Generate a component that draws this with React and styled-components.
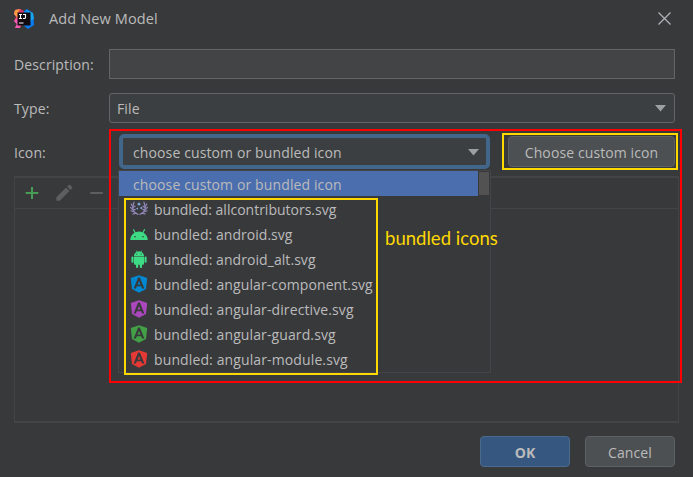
import React from 'react';
import styled, { createGlobalStyle } from 'styled-components';

const GlobalStyle = createGlobalStyle`
  * { box-sizing: border-box; }
  body { margin: 0; background: #38393b; }
`;

const Dialog = styled.main`
  position: relative;
  display: flex;
  flex-direction: column;
  width: 693px;
  height: 477px;
  padding: 0 14px;
  overflow: hidden;
  background: #38393b;
  color: #bbbbbb;
  font: 14px/20px 'Open Sans', 'Noto Sans', sans-serif;
  letter-spacing: 0.12px;
  white-space: nowrap;
`;

const TitleBar = styled.header`
  display: flex;
  align-items: center;
  height: 37px;
  margin-bottom: 12px;
`;

const Title = styled.h1`
  flex: 1;
  margin: 0 0 0 15px;
  font-size: 14.5px;
  font-weight: 400;
  letter-spacing: 0.13px;
`;

const CloseButton = styled.button`
  display: flex;
  margin-right: 8px;
  padding: 0;
  border: 0;
  background: none;
  color: #afb1b3;
`;

const Form = styled.div`
  display: grid;
  grid-template-columns: 95px 566px;
  grid-template-rows: 30px 30px 35px;
  row-gap: 14px;
  align-items: center;
`;

const Label = styled.label`
  padding-top: 2px;
`;

const IconLabel = styled.label`
  margin-top: -3px;
`;

const TextField = styled.input`
  width: 566px;
  height: 30px;
  border: 1px solid #646566;
  background: #434445;
`;

const Select = styled.div`
  display: flex;
  align-items: center;
  justify-content: space-between;
  width: ${(p) => (p.$focused ? 371 : 566)}px;
  height: ${(p) => (p.$focused ? 35 : 30)}px;
  padding: ${(p) => (p.$focused ? '2px 7px 0 10px' : '1px 8px 0 7px')};
  border: ${(p) => (p.$focused ? '4px solid #41668a' : '1px solid #646566')};
  border-radius: ${(p) => (p.$focused ? 5 : 3)}px;
  background: #3c3f41;
`;

const IconRow = styled.div`
  position: relative;
  display: flex;
  align-items: center;
  gap: 18px;
  width: 566px;
  height: 35px;
  margin-top: -6px;
  padding-left: 10px;
`;

const Button = styled.button`
  width: ${(p) => p.$width}px;
  height: 31px;
  padding: 2px 0 0;
  border: 1px solid ${(p) => (p.$primary ? '#4a6b8e' : '#5e6162')};
  border-radius: 4px;
  background: ${(p) => (p.$primary ? '#365880' : '#4c5052')};
  color: #bbbbbb;
  font: inherit;
  font-weight: ${(p) => (p.$primary ? 700 : 400)};
  letter-spacing: ${(p) => (p.$primary ? 0 : 0.1)}px;
`;

const Popup = styled.div`
  position: absolute;
  top: 36px;
  left: 9px;
  width: 373px;
  height: 203px;
  border: 1px solid #434548;
  background: #38393b;
`;

const PopupHead = styled.div`
  display: flex;
  gap: 1px;
  align-items: center;
`;

const SelectedOption = styled.div`
  width: 359px;
  height: 25px;
  padding: 4px 0 0 14px;
  background: #4b6eaf;
`;

const ScrollThumb = styled.div`
  width: 10px;
  height: 23px;
  background: #525252;
`;

const OptionList = styled.ul`
  margin: 1px 0 0;
  padding: 0 0 0 11px;
  list-style: none;
`;

const Option = styled.li`
  display: flex;
  align-items: center;
  gap: 6px;
  height: 25px;
  letter-spacing: ${(p) => p.$spacing}px;

  svg { margin-top: -1px; }
`;

const TablePanel = styled.section`
  height: 247px;
  margin: 4px 0 0;
  width: 665px;
  border: 1px solid #434446;
  border-width: 2px 1px;
`;

const Toolbar = styled.div`
  display: flex;
  align-items: center;
  gap: 15px;
  height: 31px;
  padding-left: 9px;
  border-bottom: 1px solid #434446;
`;

const Footer = styled.footer`
  display: flex;
  justify-content: flex-end;
  gap: 15px;
  margin: 13px 4px 0 0;
`;

const Highlight = styled.div`
  position: absolute;
  left: ${(p) => p.$x}px;
  top: ${(p) => p.$y}px;
  width: ${(p) => p.$w}px;
  height: ${(p) => p.$h}px;
  border: 2px solid ${(p) => p.$color};
  pointer-events: none;
`;

const Note = styled.div`
  position: absolute;
  left: 385px;
  top: 226px;
  color: #ffd800;
  font: 18.5px/24px Lato, sans-serif;
  letter-spacing: 0.03px;
`;

const Logo = () => (
  <svg width="20" height="20" viewBox="0 0 20 20">
    <path d="M1 1 6 0 10 4 7 17 6 19 1 19 3 15 0 12 2 8 0 5Z" fill="#f54a71" />
    <path d="M1 1 6 0 9 4 4 9 0 5Z" fill="#fa9a42" />
    <path d="M0 12 4 9 6 19 1 19 3 15Z" fill="#f35bb7" />
    <path d="M6 0 10 2 8 6 4 4Z" fill="#d8366a" />
    <path d="M10 2 13 0 19 4 20 16 14 20 9 16Z" fill="#087cf4" />
    <path d="M12 1 19 4 20 10 16 12Z" fill="#18a5ed" />
    <rect x="3.5" y="3.5" width="13" height="13" fill="#130b10" />
    <path d="M5 5.5h3M6.5 5.5v4M5 9.5h3M9 5.5h2.5v3q0 1-1 1H9M5 14h4.5" fill="none" stroke="#fff" strokeWidth="1.1" />
  </svg>
);

const CloseIcon = () => (
  <svg width="13" height="13" viewBox="0 0 13 13">
    <path d="m.5.5 12 12m0-12-12 12" stroke="currentColor" strokeWidth="1.3" />
  </svg>
);

const Arrow = () => (
  <svg width="11" height="7" viewBox="0 0 11 7">
    <path d="M0 0h11L5.5 6.5Z" fill="#9da0a2" />
  </svg>
);

const Laurel = () => (
  <svg width="18" height="16" viewBox="0 0 18 16">
    <g fill="none" stroke="#9489bb" strokeLinecap="round">
      <path d="M3.6 3C1.6 7 3 11.5 8 13.4M14.4 3c2 4 .6 8.5-4.4 10.4" strokeWidth="1.2" />
      <path d="m4 1.2-.6 2.6M1.2 3l1.5 2.8M.6 6.3 2.7 8.6M1 9.8l2.6 1M3 12.9l2.6-.4M5 5.2 3.5 6.4M5.3 8.3l-1.6.6M14 1.2l.6 2.6M16.8 3l-1.5 2.8M17.4 6.3l-2.1 2.3M17 9.8l-2.6 1M15 12.9l-2.6-.4M13 5.2l1.5 1.2M12.7 8.3l1.6.6" strokeWidth="1.2" />
    </g>
    <path d="m9 .7.6 1.8 1.8.6-1.8.6L9 5.5l-.6-1.8-1.8-.6 1.8-.6ZM11.3 5.4l.5 1.1 1.1.5-1.1.5-.5 1.1-.5-1.1-1.1-.5 1.1-.5ZM7.2 6.3l.4.9.9.4-.9.4-.4.9-.4-.9-.9-.4.9-.4Z" fill="#8fb8f4" />
  </svg>
);

const AndroidHead = () => (
  <svg width="18" height="18" viewBox="0 0 18 18">
    <path d="M.2 15C.4 11.4 2.2 9 4.5 7.8L2.8 4.5l1-.5 1.7 3.2c2.2-.8 4.8-.8 7 0L14.2 4l1 .5-1.7 3.3c2.3 1.2 4.1 3.6 4.3 7.2Z" fill="#3ddc84" />
    <circle cx="5" cy="11.8" r=".8" fill="#38393b" />
    <circle cx="13" cy="11.8" r=".8" fill="#38393b" />
  </svg>
);

const AndroidBody = () => (
  <svg width="18" height="18" viewBox="0 0 18 18">
    <g fill="#3ddc84">
      <path d="M4 5.9C4.1 4 5 2.6 6.5 1.9L5.8.4l.5-.2.7 1.5a6 6 0 0 1 4 0l.7-1.5.5.2-.7 1.5C13 2.6 13.9 4 14 5.9Z" />
      <path d="M4 6.6h10v7.1q0 1-1 1h-1v2.2a1.1 1.1 0 0 1-2.2 0v-2.2H8.2v2.2a1.1 1.1 0 0 1-2.2 0v-2.2H5q-1 0-1-1Z" />
      <rect x="1.4" y="6.5" width="2.1" height="6.2" rx="1" />
      <rect x="14.5" y="6.5" width="2.1" height="6.2" rx="1" />
    </g>
    <circle cx="6.8" cy="4" r=".6" fill="#38393b" />
    <circle cx="11.2" cy="4" r=".6" fill="#38393b" />
  </svg>
);

const Angular = ({ color }) => (
  <svg width="18" height="18" viewBox="0 0 18 18">
    <path d="M9 .2 17.2 3 16 14 9 17.8 2 14 .8 3Z" fill={color} />
    <path d="M8.1 2.6 3.6 13.5h2.3l.9-2.3h4.4l.9 2.3h2.3L9.9 2.6ZM9 5.9l1.4 3.5H7.6Z" fill="#38393b" fillRule="evenodd" />
  </svg>
);

const PlusIcon = () => (
  <svg width="17" height="16" viewBox="0 0 17 16">
    <path d="M8 2v12M1.7 8h12.6" stroke="#499c54" strokeWidth="2" />
  </svg>
);

const PencilIcon = () => (
  <svg width="17" height="18" viewBox="0 0 17 18">
    <path d="M.3 13.2 10.1 3.5l3.4 3.4-9.7 9.8H.3ZM11.1 2.5l1.6-1.6q.7-.7 1.4 0l2 2q.7.7 0 1.4l-1.6 1.6Z" fill="#5d5e5f" />
  </svg>
);

const MinusIcon = () => (
  <svg width="17" height="16" viewBox="0 0 17 16">
    <path d="M2.3 8h12.6" stroke="#5d5e5f" strokeWidth="2" />
  </svg>
);

const OPTIONS = [
  { name: 'allcontributors', icon: <Laurel />, spacing: 0 },
  { name: 'android', icon: <AndroidHead />, spacing: 0.04 },
  { name: 'android_alt', icon: <AndroidBody />, spacing: 0.06 },
  { name: 'angular-component', icon: <Angular color="#0288d1" />, spacing: 0.1 },
  { name: 'angular-directive', icon: <Angular color="#ab47bc" />, spacing: 0.11 },
  { name: 'angular-guard', icon: <Angular color="#43a047" />, spacing: 0.11 },
  { name: 'angular-module', icon: <Angular color="#e53935" />, spacing: 0.12 },
];

export default function App() {
  return (
    <>
      <GlobalStyle />
      <Dialog>
        <TitleBar>
          <Logo />
          <Title>Add New Model</Title>
          <CloseButton aria-label="Close"><CloseIcon /></CloseButton>
        </TitleBar>
        <Form>
          <Label htmlFor="description">Description:</Label>
          <TextField id="description" />
          <Label>Type:</Label>
          <Select><span>File</span><Arrow /></Select>
          <IconLabel>Icon:</IconLabel>
          <IconRow>
            <Select $focused><span>choose custom or bundled icon</span><Arrow /></Select>
            <Button $width={167}>Choose custom icon</Button>
            <Popup>
              <PopupHead>
                <SelectedOption>choose custom or bundled icon</SelectedOption>
                <ScrollThumb />
              </PopupHead>
              <OptionList>
                {OPTIONS.map((o) => (
                  <Option key={o.name} $spacing={o.spacing}>
                    {o.icon}
                    <span>{`bundled: ${o.name}.svg`}</span>
                  </Option>
                ))}
              </OptionList>
            </Popup>
          </IconRow>
        </Form>
        <TablePanel>
          <Toolbar><PlusIcon /><PencilIcon /><MinusIcon /></Toolbar>
        </TablePanel>
        <Footer>
          <Button $primary $width={90}>OK</Button>
          <Button $width={90}>Cancel</Button>
        </Footer>
        <Highlight $x={109} $y={129} $w={573} $h={254} $color="#ff0000" />
        <Highlight $x={502} $y={133} $w={176} $h={37} $color="#ffd800" />
        <Highlight $x={124} $y={198} $w={254} $h={177} $color="#ffd800" />
        <Note>bundled icons</Note>
      </Dialog>
    </>
  );
}
